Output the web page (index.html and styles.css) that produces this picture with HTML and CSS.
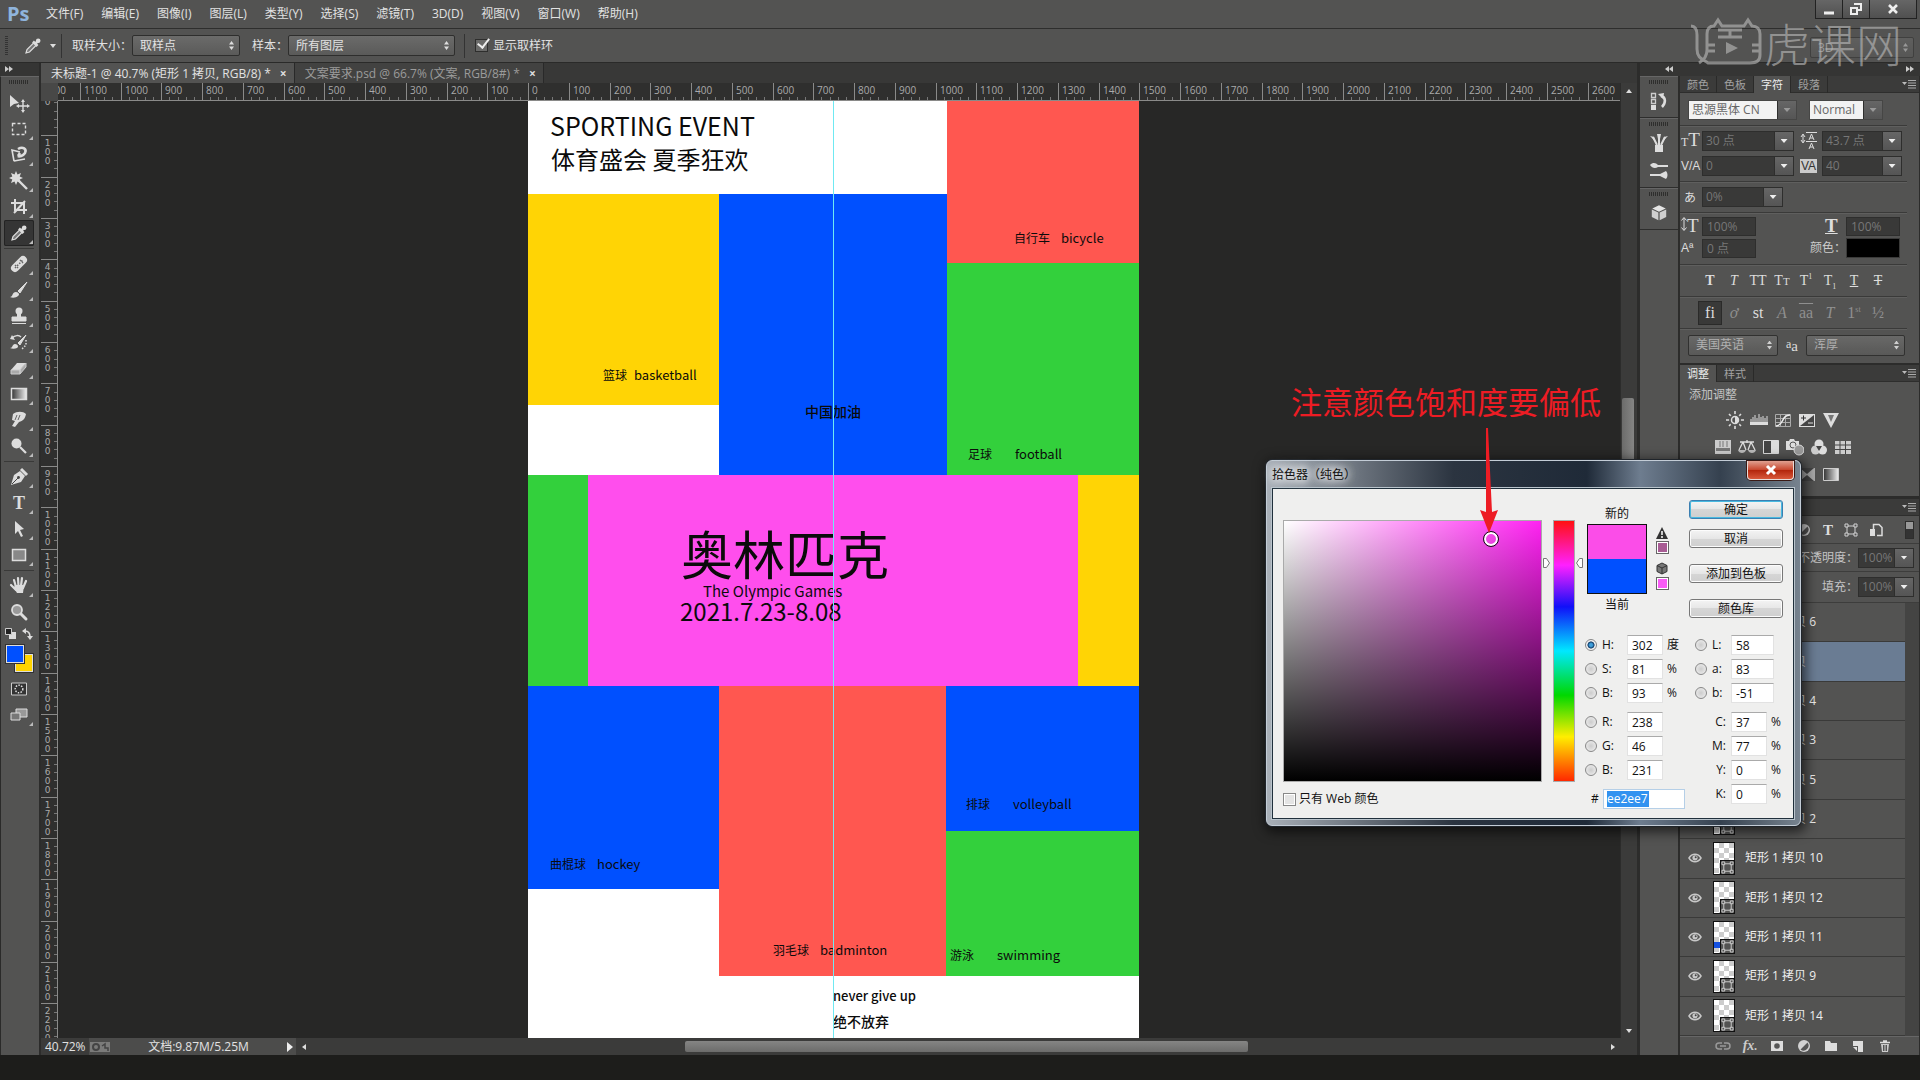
FILE: index.html
```html
<!DOCTYPE html>
<html lang="zh-CN">
<head>
<meta charset="utf-8">
<title>未标题-1 @ 40.7%</title>
<link rel="stylesheet" href="styles.css">
</head>
<body>
<svg class="defs" aria-hidden="true">
  <defs>
    <symbol id="i-dropper" viewBox="0 0 20 20"><path d="M3 17l1-3.500 7-7 2.500 2.500-7 7z" fill="#777" stroke="#ddd" stroke-width="1.200"/><path d="M10 5.500l4.500 4.500M12.500 7.500l2.500-2.500" stroke="#ddd" stroke-width="2.600"/><circle cx="15.200" cy="4.800" r="2.300" fill="#ddd"/></symbol>
    <symbol id="i-frame" viewBox="0 0 14 14"><path d="M3 3h8v8H3z" fill="none" stroke="#d2d2d2"/><path d="M1 1h3v3H1zM10 1h3v3h-3zM1 10h3v3H1zM10 10h3v3h-3z" fill="#535352" stroke="#d2d2d2"/></symbol>
    <symbol id="i-eye" viewBox="0 0 14 10"><path d="M1 5c3-5 9-5 12 0-3 5-9 5-12 0z" fill="none" stroke="#c8c8c8" stroke-width="1.500"/><circle cx="7" cy="4.800" r="2.600" fill="#c8c8c8"/><circle cx="7.700" cy="4.200" r="1" fill="#444"/></symbol>
    <symbol id="i-menu" viewBox="0 0 14 10"><path d="M0 3h5L2.500 6z" fill="#bbb"/><path d="M6 1.500h8M6 4h8M6 6.500h8M6 9h8" stroke="#aaa"/></symbol>
    <symbol id="i-half" viewBox="0 0 16 16"><circle cx="8" cy="8" r="6" fill="#d2d2d2"/><path d="M4.500 11.500l7-7a5 5 0 0 1-7 7z" fill="#555"/></symbol>
    <symbol id="i-cube" viewBox="0 0 20 20"><path d="M10 1.500l7.500 3.500L10 8.500 2.500 5z" fill="#e4e4e4"/><path d="M2 6l7.300 3.500V18L2 14.500zM18 6l-7.300 3.500V18l7.300-3.500z" fill="#cfcfcf"/></symbol>
  </defs>
</svg>

<div class="app">
  <header class="menubar">
    <span class="logo">Ps</span>
    <nav class="menus">
      <a href="#">文件(F)</a><a href="#">编辑(E)</a><a href="#">图像(I)</a><a href="#">图层(L)</a><a href="#">类型(Y)</a><a href="#">选择(S)</a><a href="#">滤镜(T)</a><a href="#">3D(D)</a><a href="#">视图(V)</a><a href="#">窗口(W)</a><a href="#">帮助(H)</a>
    </nav>
    <div class="winctl">
      <button aria-label="最小化"><svg width="12" height="14"><path d="M1 11h10" stroke="#eee" stroke-width="3"/></svg></button>
      <button aria-label="还原"><svg width="14" height="14"><path d="M5 2h7v6H9M2 6h6v6H2z" fill="none" stroke="#eee" stroke-width="2"/></svg></button>
      <button class="wide" aria-label="关闭"><svg width="12" height="12"><path d="M2 2l8 8M10 2l-8 8" stroke="#eee" stroke-width="2.600"/></svg></button>
    </div>
  </header>

  <div class="options">
    <span class="grip"></span>
    <svg class="opt-icon" width="20" height="20"><use href="#i-dropper"/></svg>
    <svg class="opt-caret" width="6" height="4"><path d="M0 0h6L3 4z" fill="#ddd"/></svg>
    <span class="vsep"></span>
    <label for="ssize">取样大小：</label>
    <span class="sel w-size"><select id="ssize"><option>取样点</option></select></span>
    <label class="lbl2" for="sample">样本：</label>
    <span class="sel w-sample"><select id="sample"><option>所有图层</option></select></span>
    <span class="vsep v2"></span>
    <label class="ringlbl"><input type="checkbox" checked>显示取样环</label>
    <span class="sel w-3d"><select aria-label="工作区"><option>3D</option></select></span>
  </div>

  <div class="work">
    <aside class="tools">
      <div class="strip"><svg width="9" height="8"><path d="M0 1l4 3-4 3zM4 1l4 3-4 3z" fill="#ccc"/></svg></div>
      <div class="toolbox">
        <span class="hgrip"></span>
        <button aria-label="移动"><svg width="24" height="24"><path d="M3 4v12l4-3 5-1z" fill="#ddd"/><path d="M16 10v10M11 15h10" stroke="#ddd" stroke-width="1.400"/><path d="M16 8l2 3h-4zM16 22l2-3h-4zM9 15l3-2v4zM23 15l-3-2v4z" fill="#ddd"/></svg></button>
        <button class="more" aria-label="选框"><svg width="20" height="20"><path d="M3.500 4.500h13v11h-13z" fill="none" stroke="#ddd" stroke-width="1.400" stroke-dasharray="3 2"/></svg></button>
        <button class="more" aria-label="套索"><svg width="20" height="20"><path d="M5 16L3 5l8 2M5 16l11-2" fill="none" stroke="#ddd" stroke-width="1.600"/><path d="M9 4c5-3 9 0 7 4-2 3-6 4-7 3M9 11l2-3" fill="none" stroke="#ddd" stroke-width="2.600"/></svg></button>
        <button class="more" aria-label="魔棒"><svg width="20" height="20"><path d="M9 9l9 9" stroke="#ddd" stroke-width="2.400"/><path d="M7 0l1.500 3.500L12 2l-1.300 3.500L14 7l-3.300 1.500L12 12 8.500 10.500 7 14 5.500 10.500 2 12l1.300-3.500L0 7l3.300-1.500L2 2l3.500 1.500z" fill="#ddd"/></svg></button>
        <button class="more" aria-label="裁剪"><svg width="20" height="20"><path d="M2 6h13v11M6 2v11h12M5 16L16 4" fill="none" stroke="#ddd" stroke-width="2"/></svg></button>
        <button class="more on" aria-label="吸管"><svg width="20" height="20"><use href="#i-dropper"/></svg></button>
        <hr>
        <button class="more" aria-label="修复画笔"><svg width="20" height="20"><path d="M6 14l8-8" stroke="#ddd" stroke-width="8" stroke-linecap="round"/><path d="M6 14l8-8M6 11l3 3M11 6l3 3" stroke="#666" stroke-width="1.500" stroke-dasharray="1.500 1.500"/></svg></button>
        <button class="more" aria-label="画笔"><svg width="20" height="20"><path d="M9 11l9-9-7 11z" fill="#ddd" stroke="#ddd"/><path d="M1 17c3 0 2-5 6-5 3 0 4 3 2 4-2 2-6 2-8 1z" fill="#ddd"/></svg></button>
        <button class="more" aria-label="图章"><svg width="20" height="20"><circle cx="10" cy="5" r="3.500" fill="#ddd"/><path d="M8.500 7h3v4H17v4H3v-4h5.500zM3 17.500h14" fill="#ddd" stroke="#ddd"/></svg></button>
        <button class="more" aria-label="历史画笔"><svg width="20" height="20"><path d="M9 11l8-8-6 10z" fill="#ddd" stroke="#ddd"/><path d="M1 16c3 0 2-4 5-4s4 3 2 4-5 1-7 0z" fill="#ddd"/><path d="M3 6c3-3 7-3 9-1" fill="none" stroke="#ddd" stroke-width="1.500"/><path d="M1 7l5 1-3-5z" fill="#ddd"/><path d="M17 8v5l-4 4" fill="none" stroke="#ddd" stroke-width="1.500" stroke-dasharray="1.500 1.500"/></svg></button>
        <button class="more" aria-label="橡皮擦"><svg width="20" height="20"><path d="M8 5h9l-6 7H2z" fill="#ddd"/><path d="M2 12h9v4H2zM11 12l6-7v4l-6 7z" fill="#aaa" stroke="#ccc"/></svg></button>
        <button class="more" aria-label="渐变"><svg width="20" height="20"><defs><linearGradient id="lg"><stop stop-color="#333"/><stop offset="1" stop-color="#eee"/></linearGradient></defs><path d="M2.500 4.500h15v11h-15z" fill="url(#lg)" stroke="#ddd" stroke-width="1.500"/></svg></button>
        <button class="more" aria-label="涂抹"><svg width="20" height="20"><path d="M4 4c4-3 10-3 13 0-1 5-3 7-7 8l-4 5-3-1 3-5-3-1z" fill="#ddd"/><path d="M8 5l-2 5M11 5l-2 5" stroke="#666"/></svg></button>
        <button class="more" aria-label="减淡"><svg width="20" height="20"><circle cx="7.500" cy="7.500" r="5" fill="#ddd"/><path d="M11 11l6 6" stroke="#ddd" stroke-width="2.200"/></svg></button>
        <hr>
        <button class="more" aria-label="钢笔"><svg width="20" height="20"><path d="M2 18L5 8l6-4 5 5-4 6z" fill="#ddd"/><path d="M12 2l6 6" stroke="#ddd" stroke-width="3"/><path d="M3 17l6-6" stroke="#444"/><circle cx="9.500" cy="10.500" r="1.400" fill="#444"/></svg></button>
        <button class="more tt" aria-label="文字">T</button>
        <button class="more" aria-label="路径选择"><svg width="20" height="20"><path d="M6 2v13l3-3 3 6 2-1-3-6 4-1z" fill="#ddd"/></svg></button>
        <button class="more" aria-label="矩形"><svg width="20" height="20"><path d="M3.500 4.500h13v11h-13z" fill="#888" stroke="#ddd" stroke-width="1.500"/></svg></button>
        <hr>
        <button class="more" aria-label="抓手"><svg width="20" height="20"><path d="M7 11L5 4M9.500 10l-.500-8M12 10l1-8M14 12l3-7M7 14l-5-5" stroke="#ddd" stroke-width="2.200" stroke-linecap="round"/><path d="M6 9h9l-1 8H8l-3-5z" fill="#ddd"/></svg></button>
        <button aria-label="缩放"><svg width="20" height="20"><circle cx="8" cy="8" r="5" fill="#999" stroke="#ddd" stroke-width="1.800"/><path d="M12 12l5 5" stroke="#ddd" stroke-width="3" stroke-linecap="round"/></svg></button>
        <div class="mini"><svg width="30" height="14"><path d="M5 5h7v7H5z" fill="#ddd"/><path d="M1.500 1.500h6v6h-6z" fill="#222" stroke="#ccc"/><path d="M21 4c4 0 5 2 5 6" fill="none" stroke="#ddd" stroke-width="1.600"/><path d="M18 4l4-3v6zM26 13l-3-4h6z" fill="#ddd"/></svg></div>
        <div class="fgbg"><button class="fg" aria-label="前景色"></button><button class="bg" aria-label="背景色"></button></div>
        <button aria-label="快速蒙版"><svg width="20" height="20"><path d="M2.500 4h15v12h-15z" fill="#333" stroke="#ccc"/><circle cx="10" cy="10" r="3.800" fill="none" stroke="#ddd" stroke-width="1.500" stroke-dasharray="1.500 1.300"/></svg></button>
        <button class="more" aria-label="屏幕模式"><svg width="20" height="20"><path d="M7 4h11v8H7z" fill="#999" stroke="#ddd"/><path d="M2 8h9v7H2z" fill="#777" stroke="#ddd"/></svg></button>
      </div>
    </aside>

    <main class="doc">
      <div class="tabs">
        <a class="tab cur" href="#">未标题-1 @ 40.7% (矩形 1 拷贝, RGB/8) * <b>×</b></a>
        <a class="tab t2" href="#">文案要求.psd @ 66.7% (文案, RGB/8#) * <b>×</b></a>
      </div>
      <div class="view">
        <div class="corner"></div>
        <div class="ruler-h" id="rh"></div>
        <div class="sb-v"><svg width="6" height="4"><path d="M0 4h6L3 0z" fill="#ddd"/></svg><i class="thumb"></i><svg width="6" height="4"><path d="M0 0h6L3 4z" fill="#ddd"/></svg></div>
        <div class="ruler-v" id="rv"></div>
        <div class="canvas">
          <div class="poster">
            <div class="blk red b1"></div><div class="blk yellow b2"></div><div class="blk blue b3"></div><div class="blk green b4"></div>
            <div class="blk green b5"></div><div class="blk pink b6"></div><div class="blk yellow b7"></div>
            <div class="blk blue b8"></div><div class="blk red b9"></div><div class="blk blue b10"></div><div class="blk green b11"></div>
            <span class="pt p-en">SPORTING EVENT</span>
            <span class="pt p-cn">体育盛会 夏季狂欢</span>
            <span class="pt p-bike">自行车<i>bicycle</i></span>
            <span class="pt p-basket">篮球<i>basketball</i></span>
            <span class="pt p-go">中国加油</span>
            <span class="pt p-foot">足球<i>football</i></span>
            <span class="pt p-title">奥林匹克</span>
            <span class="pt p-sub">The Olympic Games</span>
            <span class="pt p-date">2021.7.23-8.08</span>
            <span class="pt p-volley">排球<i>volleyball</i></span>
            <span class="pt p-hockey">曲棍球<i>hockey</i></span>
            <span class="pt p-bad">羽毛球<i>badminton</i></span>
            <span class="pt p-swim">游泳<i>swimming</i></span>
            <span class="pt p-never">never give up</span>
            <span class="pt p-never2">绝不放弃</span>
            <span class="guide"></span>
          </div>
        </div>
      </div>
      <div class="status">
        <span class="zoomv">40.72%</span>
        <span class="docinfo"><svg width="20" height="12"><path d="M0 1h20v10H0z" fill="#7b7b7a"/><circle cx="6" cy="6" r="3" fill="none" stroke="#444" stroke-width="2"/><path d="M12 5l3-2v4h3v3" fill="none" stroke="#444" stroke-width="1.500"/></svg><span>文档:9.87M/5.25M</span><svg width="6" height="10"><path d="M0 0v10l6-5z" fill="#eee"/></svg></span>
        <div class="sb-h"><svg width="4" height="6"><path d="M4 0v6L0 3z" fill="#ddd"/></svg><i class="thumb"></i><svg width="4" height="6"><path d="M0 0v6l4-3z" fill="#ddd"/></svg></div>
      </div>
    </main>

    <aside class="side">
      <div class="strip both"><svg width="9" height="8"><path d="M4 1L0 4l4 3zM8 1L4 4l4 3z" fill="#ccc"/></svg><svg width="9" height="8"><path d="M0 1l4 3-4 3zM4 1l4 3-4 3z" fill="#ccc"/></svg></div>
      <div class="sidebody">
        <div class="dock">
          <div class="dgrp"><span class="hgrip"></span><button aria-label="历史记录"><svg width="20" height="20"><path d="M2.500 2.500h4v4h-4zM2.500 8.500h4v4h-4z" fill="none" stroke="#ccc" stroke-width="1.300"/><path d="M2 14h5v5H2z" fill="#ddd"/><path d="M9 3l6-1-1 6z" fill="#ddd"/><path d="M12 5c5 1 5 7 1 11" fill="none" stroke="#ddd" stroke-width="2.600"/></svg></button></div>
          <div class="dgrp"><span class="hgrip"></span><button aria-label="画笔预设"><svg width="20" height="20"><path d="M6 12h8v7H6z" fill="#ddd"/><path d="M8 12L4 4M10 12V3M12 12l4-8" stroke="#ddd" stroke-width="2"/><path d="M1 3l4 1 1 4zM8 1l4 0-1 5H9zM19 3l-4 1-1 4z" fill="#ddd"/></svg></button><button aria-label="画笔"><svg width="20" height="20"><path d="M1 4c3-3 6-2 8 0h10v2H9c-3 2-6 1-8-2z" fill="#ddd"/><path d="M1 13h10l6-3c2 2 2 6 0 8l-6-3H1z" fill="#ddd"/></svg></button></div>
          <div class="dgrp"><span class="hgrip"></span><button aria-label="3D"><svg width="18" height="18"><use href="#i-cube"/></svg></button></div>
        </div>
        <div class="panels">
          <section class="panel">
            <div class="ptabs"><a href="#">颜色</a><a href="#">色板</a><a class="cur" href="#">字符</a><a href="#">段落</a><svg width="14" height="10"><use href="#i-menu"/></svg></div>
            <div class="char">
              <div class="crow fonts"><span class="combo white f1"><input aria-label="字体" value="思源黑体 CN"><button aria-label="选择字体"></button></span><span class="combo white f2"><input aria-label="字形" value="Normal"><button aria-label="选择字形"></button></span></div>
              <div class="csec">
                <div class="crow"><span class="ci"><small>T</small>T</span><span class="combo c1"><input aria-label="字号" value="30 点"><button aria-label="字号"></button></span><span class="ci lead"><svg width="18" height="18"><path d="M3 3v7M1 5l2-3 2 3M1 8l2 3 2-3M6 .500h11M6 9.500h11" stroke="#ddd" fill="none"/><path d="M9 8l2.500-6L14 8M10 6h3M9 17l2.500-6 2.500 6M10 15h3" stroke="#ddd" fill="none"/></svg></span><span class="combo c2"><input aria-label="行距" value="43.7 点"><button aria-label="行距"></button></span></div>
                <div class="crow"><span class="ci sans">V/A</span><span class="combo c1"><input aria-label="字距微调" value="0"><button aria-label="字距微调"></button></span><span class="ci sans va"><mark>VA</mark></span><span class="combo c2"><input aria-label="字距" value="40"><button aria-label="字距"></button></span></div>
              </div>
              <div class="csec"><div class="crow"><span class="ci jp">あ</span><span class="combo c3"><input aria-label="比例间距" value="0%"><button aria-label="比例间距"></button></span></div></div>
              <div class="csec scale">
                <div class="crow"><span class="ci"><svg width="6" height="16"><path d="M3 2v12M.500 4.500L3 1.500l2.500 3M.500 11.500l2.500 3 2.500-3" fill="none" stroke="#ddd"/></svg>T</span><input class="plain" aria-label="垂直缩放" value="100%"><span class="ci push wideT">T</span><input class="plain" aria-label="水平缩放" value="100%"></div>
                <div class="crow"><span class="ci sans">Aª</span><input class="plain" aria-label="基线偏移" value="0 点"><span class="push clabel">颜色：</span><button class="black" aria-label="颜色"></button></div>
              </div>
              <div class="csec tstyles"><button><b>T</b></button><button><i>T</i></button><button>TT</button><button>T<small>T</small></button><button>T<sup>1</sup></button><button>T<sub>1</sub></button><button><u>T</u></button><button><s>T</s></button></div>
              <div class="csec tstyles lig"><button class="on">fi</button><button class="dim"><i>ơ</i></button><button>st</button><button class="dim"><i>A</i></button><button class="dim"><u class="over">aa</u></button><button class="dim"><i>T</i></button><button class="dim">1<sup>st</sup></button><button class="dim">½</button></div>
              <div class="csec crow lang"><span class="sel l1"><select aria-label="语言"><option>美国英语</option></select></span><span class="aa"><small>a</small>a</span><span class="sel l2"><select aria-label="消除锯齿"><option>浑厚</option></select></span></div>
            </div>
          </section>
          <section class="panel adj">
            <div class="ptabs"><a class="cur" href="#">调整</a><a href="#">样式</a><svg width="14" height="10"><use href="#i-menu"/></svg></div>
            <p>添加调整</p>
            <div class="arow">
              <svg width="18" height="18"><path d="M9 0v18M0 9h18M3 3l12 12M15 3L3 15" stroke="#ddd" stroke-width="1.600"/><circle cx="9" cy="9" r="6" fill="#535352"/><circle cx="9" cy="9" r="3.500" fill="none" stroke="#ddd" stroke-width="1.500"/><path d="M9 5.500a3.500 3.500 0 0 1 0 7z" fill="#ddd"/></svg>
              <svg width="18" height="18"><path d="M0 11h18v3H0z" fill="#ddd"/><path d="M1 12V8M3 12V6M5 12V4M7 12V7M9 12V3M11 12V6M13 12V5M15 12V7M17 12V5" stroke="#ddd"/></svg>
              <svg width="18" height="18"><path d="M1.500 3.500h15v12h-15zM6.500 3v13M11.500 3v13M1 7.500h16M1 11.500h16" stroke="#aaa" fill="none"/><path d="M2 15c8 0 5-11 14-11" fill="none" stroke="#eee" stroke-width="1.500"/></svg>
              <svg width="18" height="18"><path d="M1 3h16v13H1z" fill="#ddd"/><path d="M2 15L16 4v11z" fill="#444"/><path d="M3 7h5M5.500 4.500v5" stroke="#333"/><path d="M10 12h5" stroke="#ddd"/></svg>
              <svg width="18" height="18"><path d="M1 2h16L9 17z" fill="#ddd"/><path d="M6 4h6l-3 7z" fill="#777"/></svg>
            </div>
            <div class="arow">
              <svg width="18" height="18"><path d="M1 2h16v14H1z" fill="#ccc"/><path d="M2 10h14v3H2z" fill="#777"/><path d="M6 3v6M9 3v6M13 3v6" stroke="#777"/></svg>
              <svg width="18" height="18"><path d="M2 4h14M9 2v3M5 4l-4 8M5 4l3 8M13 4l-3 8M13 4l4 8" fill="none" stroke="#ddd" stroke-width="1.300"/><path d="M0 12h8c-1 4-7 4-8 0zM10 12h8c-1 4-7 4-8 0z" fill="#bbb"/></svg>
              <svg width="18" height="18"><path d="M1.500 2.500h15v13h-15z" fill="#ddd" stroke="#ddd"/><path d="M2 3h7v12H2z" fill="#444"/></svg>
              <svg width="18" height="18"><path d="M0 3h3l1-2h4l1 2h4v9H0z" fill="#ddd"/><circle cx="7" cy="7" r="3" fill="none" stroke="#555"/><circle cx="13" cy="12" r="5" fill="#999" stroke="#ddd"/></svg>
              <svg width="18" height="18"><circle cx="9" cy="6" r="4.500" fill="#ddd"/><circle cx="5.500" cy="12" r="4.500" fill="#ccc"/><circle cx="12.500" cy="12" r="4.500" fill="#ddd"/><path d="M6 8h6l-3 5z" fill="#444"/></svg>
              <svg width="18" height="18"><path d="M1 3h16v13H1z" fill="#ccc"/><path d="M6 3v13M11.500 3v13M1 7h16M1 11.500h16" stroke="#444"/></svg>
            </div>
            <div class="arow">
              <svg width="18" height="18"><path d="M1 3h16v13H1z" fill="#ccc"/></svg><svg width="18" height="18"><path d="M1 3h16v13H1z" fill="#ccc"/></svg><svg width="18" height="18"><path d="M1 3h16v13H1z" fill="#ccc"/></svg>
              <svg width="18" height="18"><path d="M1 3h16v13H1z" fill="#aaa"/><path d="M2 3l7 6 7-6zM2 16l7-6 7 6z" fill="#444"/></svg>
              <svg width="18" height="18"><path d="M1.500 3.500h15v12h-15z" fill="url(#lg)" stroke="#ccc"/></svg>
            </div>
          </section>
          <section class="panel layers">
            <div class="ptabs"><a class="cur" href="#">图层</a><svg width="14" height="10"><use href="#i-menu"/></svg></div>
            <div class="lrow filt"><svg width="16" height="16"><use href="#i-half"/></svg><span class="ft">T</span><svg width="14" height="14"><use href="#i-frame"/></svg><svg width="14" height="14"><path d="M4.500 8V1.500H10l3 3v8H8" fill="none" stroke="#ddd" stroke-width="1.500"/><path d="M1 6h5v7H1z" fill="#ddd"/></svg><span class="switch"></span></div>
            <div class="lrow"><label for="op">不透明度：</label><span class="combo c4"><input id="op" value="100%"><button aria-label="不透明度"></button></span></div>
            <div class="lrow"><label for="fi">填充：</label><span class="combo c4"><input id="fi" value="100%"><button aria-label="填充"></button></span></div>
            <ul class="list">
              <li><svg class="eye" width="14" height="10"><use href="#i-eye"/></svg><span class="th"><svg width="14" height="14"><use href="#i-frame"/></svg></span>矩形 1 拷贝 6</li>
              <li class="cur"><svg class="eye" width="14" height="10"><use href="#i-eye"/></svg><span class="th"><svg width="14" height="14"><use href="#i-frame"/></svg></span>矩形 1 拷贝</li>
              <li><svg class="eye" width="14" height="10"><use href="#i-eye"/></svg><span class="th"><svg width="14" height="14"><use href="#i-frame"/></svg></span>矩形 1 拷贝 4</li>
              <li><svg class="eye" width="14" height="10"><use href="#i-eye"/></svg><span class="th"><svg width="14" height="14"><use href="#i-frame"/></svg></span>矩形 1 拷贝 3</li>
              <li><svg class="eye" width="14" height="10"><use href="#i-eye"/></svg><span class="th"><svg width="14" height="14"><use href="#i-frame"/></svg></span>矩形 1 拷贝 5</li>
              <li><svg class="eye" width="14" height="10"><use href="#i-eye"/></svg><span class="th"><svg width="14" height="14"><use href="#i-frame"/></svg></span>矩形 1 拷贝 2</li>
              <li><svg class="eye" width="14" height="10"><use href="#i-eye"/></svg><span class="th"><svg width="14" height="14"><use href="#i-frame"/></svg></span>矩形 1 拷贝 10</li>
              <li><svg class="eye" width="14" height="10"><use href="#i-eye"/></svg><span class="th"><svg width="14" height="14"><use href="#i-frame"/></svg></span>矩形 1 拷贝 12</li>
              <li><svg class="eye" width="14" height="10"><use href="#i-eye"/></svg><span class="th mark"><svg width="14" height="14"><use href="#i-frame"/></svg></span>矩形 1 拷贝 11</li>
              <li><svg class="eye" width="14" height="10"><use href="#i-eye"/></svg><span class="th"><svg width="14" height="14"><use href="#i-frame"/></svg></span>矩形 1 拷贝 9</li>
              <li><svg class="eye" width="14" height="10"><use href="#i-eye"/></svg><span class="th"><svg width="14" height="14"><use href="#i-frame"/></svg></span>矩形 1 拷贝 14</li>
            </ul>
            <div class="lfoot">
              <button aria-label="链接"><svg width="16" height="16"><path d="M7 5H4a3 3 0 0 0 0 6h3M9 5h3a3 3 0 0 1 0 6H9M5 8h6" fill="none" stroke="#999" stroke-width="1.500"/></svg></button>
              <button class="fx" aria-label="样式">fx<small>.</small></button>
              <button aria-label="蒙版"><svg width="16" height="16"><path d="M2 3h12v10H2z" fill="#ddd"/><circle cx="8" cy="8" r="2.800" fill="#555"/></svg></button>
              <button aria-label="调整"><svg width="16" height="16"><use href="#i-half"/></svg></button>
              <button aria-label="组"><svg width="16" height="16"><path d="M2 3h5l1 2h6v8H2z" fill="#ddd"/></svg></button>
              <button aria-label="新建"><svg width="16" height="16"><path d="M3 3h10v11H8V8H3z" fill="#ddd"/><path d="M3 9h4v4z" fill="#ddd"/></svg></button>
              <button aria-label="删除"><svg width="16" height="16"><path d="M3 4.500h10M6 3h4" stroke="#ddd" stroke-width="1.500"/><path d="M4 6h8l-1 8H5z" fill="#ccc"/><path d="M6.500 7v6M8 7v6M9.500 7v6" stroke="#555"/></svg></button>
            </div>
          </section>
        </div>
      </div>
    </aside>
  </div>
  <footer class="base"></footer>

  <div class="brand" aria-hidden="true"><svg width="74" height="50" fill="none" stroke="#b4b4b4" stroke-width="3"><path d="M1 9c5 0 6 4 6 9v14c0 9 5 10 11 14h42c7 0 10-3 10-8V17c0-5-3-8-8-8l-4-6-4 6H32l-4-6-4 6c-5 0-7 3-7 8v16c0 6-3 10-8 13"/><path d="M28 13h24M28 20h24M40 13v7M17 28h8M17 34h8M62 28h8M62 34h8"/><path d="M36 25l12 6-12 6z" fill="#b4b4b4" stroke="none"/></svg><span>虎课网</span></div>

  <p class="note">注意颜色饱和度要偏低</p>

  <section class="dialog" role="dialog" aria-label="拾色器">
    <div class="dtitle"><h2>拾色器（纯色）</h2><button class="dclose" aria-label="关闭"><svg width="12" height="12"><path d="M2 2l8 8M10 2l-8 8" stroke="#fff" stroke-width="3"/></svg></button></div>
    <div class="dbody">
      <div class="dleft">
        <div class="pick"><div class="field"><span class="dot"></span></div><div class="hue"><svg class="mk l" width="7" height="10"><path d="M.500.500h3l3 4.500-3 4.500h-3z" fill="#fff" stroke="#777"/></svg><svg class="mk r" width="7" height="10"><path d="M6.500.500h-3L.500 5l3 4.500h3z" fill="#fff" stroke="#777"/></svg></div></div>
        <label class="web"><input type="checkbox">只有 Web 颜色</label>
      </div>
      <div class="dright">
        <div class="dtop">
          <div class="cmp"><span>新的</span><div class="pair"><i class="new"></i><i class="old"></i></div><span>当前</span></div>
          <div class="warn"><svg width="12" height="12"><path d="M6 0l6 12H0z" fill="#333"/><path d="M6 4v4M6 9v2" stroke="#fff" stroke-width="1.500"/></svg><i class="w1"></i><svg class="cb" width="12" height="13"><path d="M6 1l5 2.500v6L6 12 1 9.500v-6z" fill="#777" stroke="#333"/><path d="M1 3.500L6 6l5-2.500M6 6v6" fill="none" stroke="#333"/></svg><i class="w2"></i></div>
          <div class="btns"><button class="ok">确定</button><button>取消</button><button class="g">添加到色板</button><button class="g">颜色库</button></div>
        </div>
        <div class="vals">
          <div class="vcol">
            <label class="v"><input type="radio" name="m" checked><span>H:</span><input value="302"><em>度</em></label>
            <label class="v"><input type="radio" name="m"><span>S:</span><input value="81"><em>%</em></label>
            <label class="v"><input type="radio" name="m"><span>B:</span><input value="93"><em>%</em></label>
            <label class="v gap"><input type="radio" name="m"><span>R:</span><input value="238"></label>
            <label class="v"><input type="radio" name="m"><span>G:</span><input value="46"></label>
            <label class="v"><input type="radio" name="m"><span>B:</span><input value="231"></label>
            <label class="hex gap"><span>#</span><span class="hexbox"><input value="ee2ee7"></span></label>
          </div>
          <div class="vcol">
            <label class="v w"><input type="radio" name="m"><span>L:</span><input value="58"></label>
            <label class="v w"><input type="radio" name="m"><span>a:</span><input value="83"></label>
            <label class="v w"><input type="radio" name="m"><span>b:</span><input value="-51"></label>
            <label class="v c gap"><span>C:</span><input value="37"><em>%</em></label>
            <label class="v c"><span>M:</span><input value="77"><em>%</em></label>
            <label class="v c"><span>Y:</span><input value="0"><em>%</em></label>
            <label class="v c"><span>K:</span><input value="0"><em>%</em></label>
          </div>
        </div>
      </div>
    </div>
  </section>
  <svg class="arrow" width="20" height="106" aria-hidden="true"><path d="M7 0h2l4 84 6-2-9 23L1 82l6 2z" fill="#ed1c24"/></svg>
</div>
<script src="rulers.js"></script>
</body>
</html>
```
FILE: styles.css
```css
* { box-sizing: border-box; }
body { margin: 0; background: #1d1d1b; color: #e2e2e2; font: 12px/16px "Open Sans", "Noto Sans CJK SC", sans-serif; }
button, input, select { font: inherit; color: inherit; margin: 0; padding: 0; border: 0; background: none; border-radius: 0; }
a { color: inherit; text-decoration: none; }
svg { display: block; flex: none; }
p, h2, ul { margin: 0; padding: 0; font-size: inherit; font-weight: inherit; list-style: none; }
i, em { font-style: normal; }
.defs { position: absolute; width: 0; height: 0; }
.app { position: relative; display: flex; flex-direction: column; min-height: 100vh; overflow: hidden; }

.menubar { display: flex; height: 29px; background: #535352; border-bottom: 1px solid #2e2e2d; align-items: center; }
.logo { width: 46px; padding-left: 7px; font: bold 20px/24px "Open Sans", sans-serif; color: #8fb4dc; }
.menus { display: flex; gap: 18px; }
.winctl { display: flex; margin: 0 3px 0 auto; align-self: flex-start; border: 1px solid #222; border-top: 0; }
.winctl button { width: 27px; height: 18px; display: grid; place-items: center; background: linear-gradient(#666, #505050); border-right: 1px solid #222; }
.winctl .wide { width: 46px; border-right: 0; }

.options { display: flex; align-items: center; height: 34px; padding-left: 5px; background: #535352; border-bottom: 1px solid #2a2a29; }
.grip { width: 3px; height: 20px; background: repeating-linear-gradient(#333 0 1px, transparent 1px 2px); }
.opt-icon { margin-left: 15px; }
.opt-caret { margin-left: 7px; }
.vsep { width: 1px; height: 24px; background: #333; margin: 0 10px 0 5px; }
.v2 { margin: 0 10px 0 9px; }
.sel { position: relative; display: block; height: 21px; border: 1px solid #2e2e2d; border-radius: 2px; background: linear-gradient(#6b6b6a, #5a5a59); }
.sel::after { content: ""; position: absolute; right: 5px; top: 5px; width: 5px; height: 9px; background: #ddd; clip-path: polygon(50% 0, 100% 40%, 0 40%, 0 60%, 100% 60%, 50% 100%, 0 60%, 0 40%); }
.sel select { appearance: none; width: 100%; height: 19px; padding-left: 7px; display: block; line-height: 18px; }
.w-size { width: 108px; }
.lbl2 { margin-left: 12px; }
.w-sample { width: 167px; }
.ringlbl { display: flex; align-items: center; gap: 5px; }
.ringlbl input { appearance: none; width: 13px; height: 13px; border: 1px solid #2e2e2d; background: #6a6a69; position: relative; }
.ringlbl input::after { content: ""; position: absolute; left: 4px; bottom: 3px; width: 5px; height: 10px; border: solid #eee; border-width: 0 2px 2px 0; transform: rotate(38deg); }
.w-3d { width: 104px; margin: 4px 6px 0 auto; opacity: .5; }

.work { display: flex; flex: 1; background: #2c2c2b; }
.strip { height: 13px; padding: 2px 5px; background: #353534; }
.tools { width: 39px; display: flex; flex-direction: column; }
.toolbox { flex: 1; background: #535352; border-left: 1px solid #2a2a29; border-top: 1px solid #666; padding-right: 2px; display: flex; flex-direction: column; align-items: center; }
.hgrip { display: block; width: 20px; height: 4px; margin: 3px auto 8px; background: repeating-linear-gradient(90deg, #2e2e2d 0 1px, transparent 1px 2px); }
.toolbox .hgrip { margin: 3px 0 6px; }
.toolbox > button { position: relative; width: 30px; height: 26px; display: grid; place-items: center; flex: none; border-radius: 2px; }
.toolbox .more::after { content: ""; position: absolute; right: 1px; bottom: 2px; width: 4px; height: 4px; background: #bbb; clip-path: polygon(100% 0, 100% 100%, 0 100%); }
.toolbox .on { background: #353535; box-shadow: inset 0 0 0 1px #232323; }
.toolbox hr { width: 30px; height: 1px; margin: 2px 0; border: 0; background: #393938; flex: none; }
.tt { font: bold 18px/20px "Liberation Serif", serif; color: #ddd; }
.mini { height: 16px; margin-top: 2px; }
.fgbg { display: grid; grid-template-columns: 9px 9px 9px; grid-template-rows: 9px 9px 9px; height: 33px; padding-top: 2px; }
.fgbg button { border: 1px solid #ddd; box-shadow: 0 0 0 1px #333; }
.fg { grid-area: 1 / 1 / 3 / 3; background: #0050ff; z-index: 1; }
.bg { grid-area: 2 / 2 / 4 / 4; background: #ffd400; }

.doc { flex: 1; min-width: 0; margin-left: 2px; display: flex; flex-direction: column; }
.tabs { display: flex; height: 20px; background: #383837; }
.tab { display: flex; gap: 9px; align-items: center; padding: 2px 7px 0 10px; background: #424241; border-right: 1px solid #292929; color: #9b9b9b; white-space: nowrap; }
.tab b { color: #ddd; }
.tab.cur { background: #535352; color: #e2e2e2; }
.view { flex: 1; display: grid; grid-template-columns: 17px 1fr 17px; grid-template-rows: 18px 1fr; }
.corner { background: #484847; }
.ruler-h, .ruler-v { position: relative; overflow: hidden; background: #2f2f2e; color: #aaa; }
.ruler-h { border-bottom: 1px solid #8a8a89; font: 10px/12px "Open Sans", sans-serif; }
.ruler-v { border-right: 1px solid #8a8a89; font: 9px/9px "DejaVu Sans", sans-serif; }
.ruler-h span { position: absolute; top: 0; height: 17px; border-left: 1px solid #8a8a89; padding: 1px 0 0 3px; }
.ruler-v span { position: absolute; left: 0; width: 16px; border-top: 1px solid #8a8a89; padding: 3px 0 0 3px; }
.ruler-v span b { display: block; font-weight: 400; width: 7px; text-align: center; }
.ruler-h u, .ruler-v u { position: absolute; background: #777; }
.ruler-h u { bottom: 0; width: 1px; height: 3px; }
.ruler-v u { right: 0; height: 1px; width: 3px; }
.sb-v { grid-row: 1 / 3; grid-column: 3; background: #3b3b3a; border-left: 1px solid #2c2c2b; display: flex; flex-direction: column; align-items: center; justify-content: space-between; padding: 6px 0 5px; position: relative; }
.thumb { position: absolute; border-radius: 2px; }
.sb-v .thumb { top: 33%; height: 28%; left: 1px; width: 12px; background: linear-gradient(90deg, #6c6c6b, #858584); }
.canvas { grid-row: 2; grid-column: 2; background: #272726; position: relative; overflow: hidden; }
.poster { position: absolute; left: 470px; top: 0; bottom: 0; width: 611px; background: #fff; color: #0b0b0b; font-family: "Noto Sans CJK SC", sans-serif; }
.blk, .pt, .guide { position: absolute; }
.red { background: #ff5750; } .yellow { background: #ffd405; } .blue { background: #0050ff; } .green { background: #33d03c; } .pink { background: #ff4eed; }
.b1 { left: 419px; top: 0; width: 192px; height: 162px; }
.b2 { left: 0; top: 93px; width: 191px; height: 211px; }
.b3 { left: 191px; top: 93px; width: 228px; height: 281px; }
.b4 { left: 419px; top: 162px; width: 192px; height: 212px; }
.b5 { left: 0; top: 374px; width: 60px; height: 211px; }
.b6 { left: 60px; top: 374px; width: 490px; height: 211px; }
.b7 { left: 550px; top: 374px; width: 61px; height: 211px; }
.b8 { left: 0; top: 585px; width: 191px; height: 203px; }
.b9 { left: 191px; top: 585px; width: 227px; height: 290px; }
.b10 { left: 418px; top: 585px; width: 193px; height: 145px; }
.b11 { left: 418px; top: 730px; width: 193px; height: 145px; }
.pt { white-space: nowrap; font-size: 12px; line-height: 16px; }
.pt i { margin-left: 11px; font-size: 13px; }
.p-en { left: 22px; top: 7px; font-size: 25px; line-height: 34px; }
.p-cn { left: 23px; top: 42px; font-size: 24px; line-height: 32px; }
.p-bike { left: 486px; top: 129px; }
.p-basket { left: 75px; top: 266px; } .p-basket i { margin-left: 7px; }
.p-go { left: 277px; top: 302px; font-size: 14px; font-weight: 500; }
.p-foot { left: 440px; top: 345px; } .p-foot i, .p-volley i, .p-swim i { margin-left: 23px; }
.p-title { left: 153px; top: 422px; font-size: 52px; line-height: 60px; }
.p-sub { left: 175px; top: 480px; font-size: 15px; line-height: 20px; }
.p-date { left: 152px; top: 495px; font-size: 24px; line-height: 30px; }
.p-volley { left: 438px; top: 695px; }
.p-hockey { left: 22px; top: 755px; }
.p-bad { left: 245px; top: 841px; }
.p-swim { left: 422px; top: 846px; }
.p-never { left: 305px; top: 887px; font-size: 13px; font-weight: 500; }
.p-never2 { left: 305px; top: 912px; font-size: 14px; font-weight: 500; }
.guide { left: 305px; top: 0; bottom: 0; width: 1px; background: #6fe9f2; }

.status { display: flex; height: 17px; align-items: center; background: #3b3b3a; line-height: 17px; }
.zoomv { width: 48px; padding-left: 4px; }
.docinfo { display: flex; align-items: center; justify-content: space-between; width: 207px; padding: 0 3px 0 1px; background: #4c4c4b; height: 17px; }
.sb-h { flex: 1; position: relative; display: flex; justify-content: space-between; align-items: center; height: 17px; padding: 0 22px 0 6px; }
.sb-h .thumb { left: 29%; width: 42%; top: 3px; height: 11px; background: linear-gradient(#858584, #6c6c6b); }

.side { width: 283px; display: flex; flex-direction: column; padding-left: 3px; }
.both { display: flex; justify-content: space-between; padding-left: 25px; }
.sidebody { flex: 1; display: flex; gap: 2px; padding-right: 1px; }
.dock { width: 38px; background: #535352; }
.dgrp { border-bottom: 1px solid #2e2e2d; border-top: 1px solid #666; padding-bottom: 3px; }
.dgrp button { display: grid; place-items: center; width: 38px; height: 26px; }
.dgrp button + button { margin-top: 2px; }
.dgrp .hgrip { margin-bottom: 4px; }
.panels { flex: 1; display: flex; flex-direction: column; }
.panel { background: #535352; display: flex; flex-direction: column; }
.ptabs { display: flex; height: 17px; background: #3b3b3a; border-bottom: 1px solid #2e2e2d; color: #a2a2a2; font-size: 11px; line-height: 17px; align-items: center; }
.ptabs a { padding: 0 7px; width: 37px; border-right: 1px solid #2a2a29; height: 17px; white-space: nowrap; }
.ptabs .cur { background: #535352; color: #eee; }
.ptabs svg { margin: 0 3px 0 auto; }
.char { padding: 7px 12px 7px 0; }
.crow { display: flex; align-items: center; height: 20px; color: #777; }
.csec .crow + .crow { margin-top: 5px; }
.fonts { padding-left: 8px; gap: 12px; margin-bottom: 5px; }
.csec { border-top: 1px solid #3a3a39; box-shadow: inset 0 1px 0 #5f5f5e; padding: 5px 0 5px 1px; }
.combo { display: flex; height: 20px; border: 1px solid #2e2e2d; background: #393938; color: #777; }
.combo input { flex: 1; width: 0; min-width: 0; padding-left: 3px; }
.combo button { width: 19px; background: linear-gradient(#666, #555); border-left: 1px solid #2e2e2d; display: grid; place-items: center; }
.combo button::after { content: ""; width: 7px; height: 4px; background: #eee; clip-path: polygon(0 0, 100% 0, 50% 100%); }
.white { border-color: #464645; }
.white input { background: #f2f2f2; color: #666; }
.white button::after { background: #999; }
.f1 { width: 109px; } .f2 { width: 74px; }
.c1 { width: 92px; } .c2 { width: 80px; } .c3 { width: 81px; } .c4 { width: 56px; }
.ci { width: 21px; color: #ddd; font: 19px/20px "Liberation Serif", serif; display: flex; align-items: baseline; white-space: nowrap; }
.ci small { font-size: 12px; }
.ci.sans { font: 12px/20px "Liberation Sans", sans-serif; }
.c1 + .ci { margin-left: 6px; width: 22px; }
.ci mark { background: #ccc; color: #333; padding: 0 1px; line-height: 14px; }
.jp { font: 12px/20px "Noto Sans CJK JP", sans-serif; padding-left: 3px; }
.plain { width: 54px; height: 19px; padding-left: 4px; background: #393938; border: 1px solid #2e2e2d; color: #777; }
.push { margin-left: auto; }
.wideT { font-weight: bold; text-decoration: underline; }
.crow .clabel { color: #ccc; }
.black { width: 54px; height: 20px; background: #000; border: 1px solid #3a3a39; }
.scale { padding: 3px 7px 6px 1px; }
.scale .crow + .crow { margin-top: 2px; }
.tstyles { display: flex; padding: 5px 0 4px 19px; gap: 2px; height: 32px; }
.tstyles button { width: 22px; height: 22px; color: #ddd; font: 14px/20px "Liberation Serif", serif; white-space: nowrap; }
.tstyles small { font-size: 11px; } .tstyles sup, .tstyles sub { font-size: 8px; line-height: 0; }
.tstyles i { font-style: italic; }
.lig button { font-size: 16px; }
.tstyles .dim { color: #8f8f8f; }
.tstyles .on { background: #393938; box-shadow: 0 0 0 1px #2a2a29; }
.over { text-decoration: overline; }
.lang { height: 28px; padding: 5px 0 0 8px; color: #bbb; }
.lang .sel { opacity: .9; }
.l1 { width: 90px; } .l2 { width: 99px; }
.aa { width: 28px; text-align: center; font: 15px/16px "Liberation Serif", serif; color: #ddd; }
.aa small { font-size: 12px; vertical-align: 3px; }
.adj { height: 131px; margin-top: 2px; }
.adj p { padding: 5px 9px 3px; color: #c4c4c4; }
.arow { display: flex; justify-content: center; gap: 6px; height: 27px; align-items: center; padding-right: 33px; }
.layers { flex: 1; margin-top: 3px; }
.lrow { display: flex; align-items: center; justify-content: flex-end; height: 28px; padding-right: 5px; border-bottom: 1px solid #3d3d3c; color: #c4c4c4; }
.lrow + .lrow + .lrow { height: 31px; }
.filt { gap: 11px; }
.ft { font: bold 15px/20px "Liberation Serif", serif; color: #ddd; }
.switch { width: 9px; height: 18px; margin-left: 11px; background: linear-gradient(#999 45%, #333 45%); border: 1px solid #2e2e2d; }
.list { flex: 1; display: flex; flex-direction: column; margin-right: 14px; box-shadow: 14px 0 0 #444443; }
.list li { flex: 1; min-height: 36px; display: flex; align-items: center; border-bottom: 1px solid #3a3a39; color: #eee; }
.list .cur { background: #6a7c93; }
.eye { margin: 0 7px 0 8px; }
.th { flex: none; display: flex; align-items: flex-end; justify-content: flex-end; width: 22px; height: 33px; margin: 0 10px 0 4px; border: 1px solid #111; background: repeating-conic-gradient(#ccc 0 25%, #fff 0 50%) 0 0 / 10px 10px; }
.th svg { background: #535352; outline: 1px solid #111; width: 13px; height: 13px; }
.mark { background: linear-gradient(#1450e0, #1450e0) 0 20px / 7px 6px no-repeat, repeating-conic-gradient(#ccc 0 25%, #fff 0 50%) 0 0 / 10px 10px; }
.lfoot { display: flex; height: 19px; padding: 0 22px 0 31px; justify-content: space-between; align-items: center; border-top: 1px solid #666; }
.lfoot button { width: 24px; display: grid; place-items: center; }
.lfoot .fx { display: block; font: italic bold 14px/16px "Liberation Serif", serif; color: #ccc; }
.base { height: 25px; }

.brand { position: absolute; right: 18px; top: 15px; display: flex; gap: 0; align-items: center; color: #b4b4b4; opacity: .65; font: 300 46px/54px "Noto Sans CJK SC", sans-serif; }
.note { position: absolute; right: 319px; top: 380px; color: #ed1c24; font: 31px/42px "Noto Sans CJK SC", sans-serif; white-space: nowrap; }
.arrow { position: absolute; right: 421px; top: 428px; }

.dialog { position: absolute; right: 119px; top: 460px; width: 535px; color: #111; padding: 0 6px 6px 5px; border: 1px solid #c3ccd6; border-radius: 6px; background: linear-gradient(90deg, #a9b0b8, #2b3440 35%, #1f2a38 60%, #6e7d8f 70%, #35414f 85%, #77838f); box-shadow: 0 0 0 1px #20252b, 2px 3px 12px 3px rgba(0, 0, 0, .6); }
.dtitle { display: flex; justify-content: space-between; height: 27px; }
.dtitle h2 { line-height: 27px; text-shadow: 0 0 8px #fff, 0 0 8px #fff, 0 0 14px #fff; }
.dclose { width: 47px; height: 19px; display: grid; place-items: center; background: linear-gradient(#e0a090, #c8452c 50%, #b3260c 52%, #d8583a); border: 1px solid #e8dcd8; border-top: 0; border-radius: 0 0 4px 4px; box-shadow: 0 0 0 1px #3a1a15; }
.dbody { display: flex; justify-content: space-between; background: #efefee; border: 1px solid #20303c; outline: 1px solid #b9c4cc; padding: 11px 10px 7px; }
.dleft { padding-top: 20px; }
.pick { display: flex; gap: 11px; }
.field { position: relative; width: 259px; height: 262px; border: 1px solid #aaa; background: linear-gradient(transparent, #000), linear-gradient(90deg, #fff, #ff22f2); }
.dot { position: absolute; left: 78%; top: 11px; width: 14px; height: 14px; border: 2px solid #fff; border-radius: 50%; outline: 1px solid #111; }
.hue { position: relative; width: 22px; height: 262px; border: 1px solid #aaa; background: linear-gradient(#ff1010, #ff20ff 17%, #1010f8 33%, #00e8ff 50%, #00d800 67%, #ffee00 83%, #ff2800); }
.mk { position: absolute; top: 37px; }
.mk.l { left: -11px; } .mk.r { right: -9px; }
.web { display: flex; align-items: center; gap: 3px; margin-top: 9px; }
.web input { appearance: none; width: 13px; height: 13px; border: 1px solid #888; background: #e4e4e4; box-shadow: inset 0 0 0 1px #fff; }
.dright { width: 198px; }
.dtop { display: flex; height: 133px; }
.cmp { width: 62px; margin-left: 1px; display: flex; flex-direction: column; align-items: center; padding-top: 6px; }
.pair { width: 60px; height: 70px; border: 1px solid #111; display: grid; margin: 2px 0 3px; }
.new { background: #fb4de8; } .old { background: #0050ff; }
.warn { width: 14px; margin-left: 8px; padding-top: 27px; }
.warn i { display: block; width: 13px; height: 13px; border: 1px solid #666; box-shadow: inset 0 0 0 1px #fff; margin-top: 2px; }
.w1 { background: #a85c94; } .w2 { background: #f85bf5; }
.cb { margin-top: 8px; }
.btns { margin-left: auto; width: 94px; display: flex; flex-direction: column; }
.btns button { height: 19px; line-height: 16px; margin-bottom: 10px; border: 1px solid #777; border-radius: 3px; background: linear-gradient(#f4f4f4, #e6e6e6 50%, #d6d6d6 50%, #cfcfcf); box-shadow: inset 0 0 0 1px #fcfcfc; }
.btns .ok { border-color: #3c7fb1; box-shadow: inset 0 0 0 1px #48b9e0; }
.btns .g { margin-top: 6px; }
.vals { display: flex; justify-content: space-between; }
.v { display: flex; align-items: center; height: 24px; }
.v.gap, .hex.gap { margin-top: 5px; }
.v input[type=radio] { appearance: none; width: 12px; height: 12px; border: 1px solid #888; border-radius: 50%; background: radial-gradient(#ccc, #f2f2f2); }
.v input[type=radio]:checked { background: radial-gradient(#3fa0dc 20%, #113a66 45%, #f2f2f2 55%); }
.v span { width: 25px; margin-left: 5px; }
.v input:not([type]) { width: 36px; height: 20px; }
.vals input:not([type]) { background: #fff; border: 1px solid #e2e2e2; border-top-color: #aaa; padding-left: 4px; }
.v em { margin-left: 4px; width: 12px; }
.v.w span { width: 19px; }
.v.w input:not([type]) { width: 43px; }
.v.c span { width: 29px; margin: 0 5px 0 2px; text-align: right; }
.hex { display: flex; align-items: center; height: 24px; }
.hex > span:first-child { width: 18px; padding-left: 6px; }
.hexbox { display: flex; border: 1px solid #b5cfe7; background: #fff; padding: 1px 35px 1px 3px; height: 20px; }
.vals .hexbox input:not([type]) { width: 42px; border: 0; padding: 0; background: #3192f0; color: #fff; }
```
FILE: rulers.js
```js
// Document rulers: one label per 100 px of the document, five minor ticks between labels.
function build(id, axis, origin, step, from, to) {
  const ruler = document.getElementById(id);
  for (let n = from; n <= to; n++) {
    const pos = origin + n * step;
    const label = document.createElement('span');
    label.style[axis] = Math.round(pos) + 'px';
    const text = String(Math.abs(n * 100));
    if (axis === 'top') {
      for (const digit of text) {
        const b = document.createElement('b');
        b.textContent = digit;
        label.append(b);
      }
    } else {
      label.textContent = text;
    }
    ruler.append(label);
    for (let k = 1; k < 5; k++) {
      const tick = document.createElement('u');
      tick.style[axis] = Math.round(pos + k * step / 5) + 'px';
      ruler.append(tick);
    }
  }
}
build('rh', 'left', 470, 40.75, -12, 26);
build('rv', 'top', -7, 41.33, 0, 22);
```
